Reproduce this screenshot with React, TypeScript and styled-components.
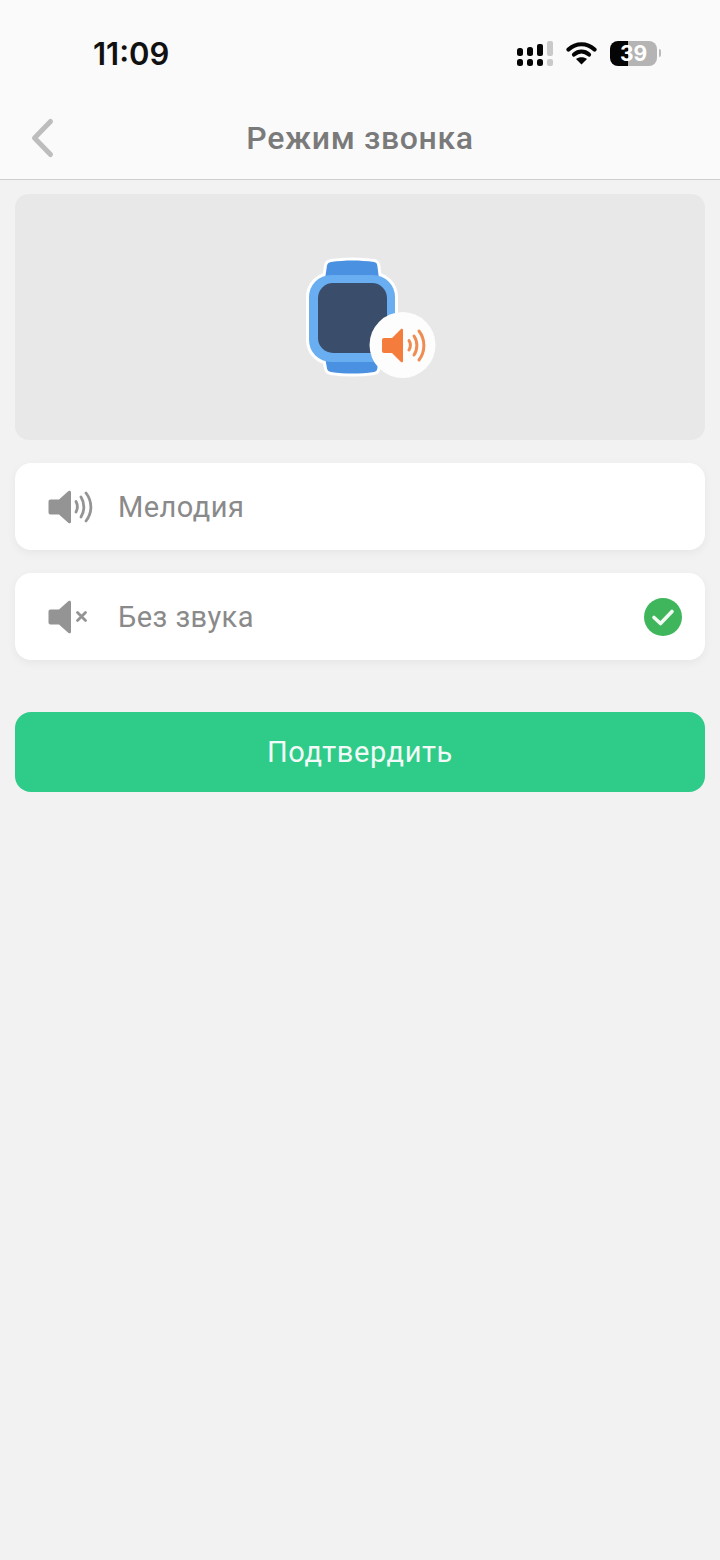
import styled, { createGlobalStyle } from "styled-components";

const GlobalStyle = createGlobalStyle`
  html, body {
    margin: 0;
    padding: 0;
    background: #f2f2f2;
  }
  * {
    box-sizing: border-box;
  }
`;

const Page = styled.div`
  width: 720px;
  height: 1560px;
  background: #f2f2f2;
  font-family: Roboto, "Noto Sans", sans-serif;
  overflow: hidden;
`;

const Header = styled.header`
  height: 180px;
  background: #fafafa;
  border-bottom: 1px solid #cfcfcf;
`;

const StatusBar = styled.div`
  height: 97px;
  display: flex;
  align-items: flex-start;
  justify-content: space-between;
  padding: 36px 63px 0 93px;
`;

const Time = styled.div`
  font-family: Inter, sans-serif;
  font-size: 31px;
  line-height: 36px;
  font-weight: 600;
  color: #111;
`;

const StatusIcons = styled.div`
  display: flex;
  align-items: center;
  gap: 13px;
  height: 34px;
`;

const Battery = styled.div`
  position: relative;
  width: 47px;
  height: 25px;
  border-radius: 8px;
  background: linear-gradient(90deg, #050505 0 39%, #b4b4b4 39% 100%);
  display: flex;
  align-items: center;
  justify-content: center;
  font-family: Inter, sans-serif;
  font-size: 21px;
  font-weight: 700;
  color: #fff;

  &::after {
    content: "";
    position: absolute;
    right: -4px;
    top: 8px;
    width: 2px;
    height: 8px;
    border-radius: 0 2px 2px 0;
    background: #b9b9b9;
  }
`;

const NavBar = styled.div`
  position: relative;
  height: 82px;
  display: flex;
  align-items: center;
  justify-content: center;
`;

const BackButton = styled.div`
  position: absolute;
  left: 29px;
  top: 20px;
  display: flex;
`;

const Title = styled.h1`
  margin: 0;
  font-size: 32px;
  font-weight: 500;
  letter-spacing: 0.65px;
  color: #7a7a7a;
`;

const Content = styled.main`
  padding: 14px 15px 0;
  display: flex;
  flex-direction: column;
`;

const Banner = styled.div`
  height: 246px;
  border-radius: 14px;
  background: #e8e8e8;
  display: flex;
  align-items: center;
  justify-content: center;
`;

const Illustration = styled.svg`
  display: block;
  margin-left: 16px;
`;

const OptionList = styled.div`
  margin-top: 23px;
  display: flex;
  flex-direction: column;
  gap: 23px;
`;

const Option = styled.div`
  height: 87px;
  border-radius: 16px;
  background: #fff;
  box-shadow: 0 3px 10px rgba(0, 0, 0, 0.05);
  display: flex;
  align-items: center;
  padding: 0 23px 0 33px;
`;

const OptionIcon = styled.svg`
  flex: none;
  display: block;
`;

const OptionLabel = styled.span`
  margin-left: 23px;
  flex: 1;
  font-size: 29px;
  letter-spacing: 0.45px;
  color: #8a8a8a;
`;

const ConfirmButton = styled.button`
  margin-top: 52px;
  height: 80px;
  border: 0;
  border-radius: 16px;
  background: #2fcb89;
  color: #f2fbf7;
  font-family: inherit;
  font-size: 29px;
  font-weight: 400;
  letter-spacing: 0.6px;
`;

const SPEAKER =
  "M0.500 12.500c0-1.200.8-2 2-2H11L20.500 2C21.600 1.200 23 1.800 23 3.200v29.600c0 1.400-1.400 2-2.500 1.200L11 25.500H2.500c-1.200 0-2-.8-2-2z";

const BAND_TOP = "M31 7c14-2 29-2 43 0 2 .3 3 1.500 3.300 3.500L79 24H25l2-13.500C27.400 8.500 29 7.300 31 7z";
const BAND_BOTTOM = "M25 102h54l-1.700 11.500c-.3 2-1.300 3.200-3.300 3.500-14 2-29 2-43 0-2-.3-3.600-1.500-4-3.500z";

const App = () => (
  <Page>
    <GlobalStyle />
    <Header>
      <StatusBar>
        <Time>11:09</Time>
        <StatusIcons>
          <svg width="36" height="25" viewBox="0 0 36 25" fill="#050505">
            <rect x="0" y="7" width="6" height="8" rx="2.500" />
            <rect x="10" y="6" width="6" height="9" rx="2.500" />
            <rect x="20" y="3" width="6" height="12" rx="2" />
            <rect x="30" y="0" width="6" height="15" rx="2" fill="#c9c9c9" />
            <rect x="0" y="18" width="6" height="7" rx="2.500" />
            <rect x="10" y="18" width="6" height="7" rx="2.500" />
            <rect x="20" y="18" width="6" height="7" rx="2.500" />
            <rect x="30" y="18" width="6" height="7" rx="2" fill="#c9c9c9" />
          </svg>
          <svg width="31" height="24" viewBox="0 0 31 24" fill="none" stroke="#050505" strokeWidth="4.200" strokeLinecap="round">
            <path d="M2.500 8.500C10 1.500 21 1.500 28.500 8.500" />
            <path d="M8 13.500C12.500 9.600 18.500 9.600 23 13.500" />
            <path d="M15.500 23.500l-5.500-5.500c3-2.400 8-2.400 11 0z" fill="#050505" stroke="none" />
          </svg>
          <Battery>39</Battery>
        </StatusIcons>
      </StatusBar>
      <NavBar>
        <BackButton>
          <svg width="26" height="42" viewBox="0 0 26 42" fill="none" stroke="#bdbdbd" strokeWidth="5" strokeLinecap="round" strokeLinejoin="round">
            <path d="M21.500 4.500L5.500 21l16 16.500" />
          </svg>
        </BackButton>
        <Title>Режим звонка</Title>
      </NavBar>
    </Header>
    <Content>
      <Banner>
        <Illustration width="136" height="124" viewBox="0 0 136 124">
          <g fill="#fff" stroke="#fff" strokeWidth="6" strokeLinejoin="round">
            <path d={BAND_TOP} />
            <path d={BAND_BOTTOM} />
            <rect x="9" y="20" width="86" height="87" rx="22" />
          </g>
          <path d={BAND_TOP} fill="#4b91e2" />
          <path d={BAND_BOTTOM} fill="#4b91e2" />
          <rect x="9" y="20" width="86" height="87" rx="22" fill="#68aef0" />
          <rect x="18" y="28" width="69" height="70" rx="15" fill="#3a4d6b" />
          <circle cx="102.500" cy="90" r="33" fill="#fdfdfd" />
          <path d="M82 85c0-1.100.9-2 2-2h8L101 74c.8-.8 2-.2 2 1v31c0 1.200-1.200 1.800-2 1l-9-9h-8c-1.100 0-2-.9-2-2z" fill="#f47c3c" />
          <g fill="none" stroke="#ee8c52" strokeWidth="3" strokeLinecap="round">
            <path d="M109 85.500c1.800 3 1.800 6.500 0 9.500" />
            <path d="M114 81c3.800 5.500 3.800 13.500 0 19" />
            <path d="M119 76c6.500 8.500 6.500 20.500 0 29" />
          </g>
        </Illustration>
      </Banner>
      <OptionList>
        <Option>
          <OptionIcon width="47" height="36" viewBox="0 0 47 36">
            <path d={SPEAKER} fill="#949494" />
            <g fill="none" stroke="#949494" strokeWidth="2.800" strokeLinecap="round">
              <path d="M28 12.500c1.800 3.500 1.800 7 0 10.500" />
              <path d="M33 8c3.800 6 3.800 14 0 20" />
              <path d="M38 4c6.500 8.500 6.500 19.500 0 28" />
            </g>
          </OptionIcon>
          <OptionLabel>Мелодия</OptionLabel>
        </Option>
        <Option>
          <OptionIcon width="47" height="36" viewBox="0 0 47 36">
            <path d={SPEAKER} fill="#949494" />
            <path d="M29.500 13.500l8 8M37.500 13.500l-8 8" fill="none" stroke="#949494" strokeWidth="2.800" strokeLinecap="round" />
          </OptionIcon>
          <OptionLabel>Без звука</OptionLabel>
          <svg width="38" height="38" viewBox="0 0 38 38">
            <circle cx="19" cy="19" r="19" fill="#3fb65c" />
            <path d="M10 19.500l6.500 6L28 13.500" fill="none" stroke="#f2fbf3" strokeWidth="3.600" strokeLinecap="round" strokeLinejoin="round" />
          </svg>
        </Option>
      </OptionList>
      <ConfirmButton>Подтвердить</ConfirmButton>
    </Content>
  </Page>
);

export default App;
